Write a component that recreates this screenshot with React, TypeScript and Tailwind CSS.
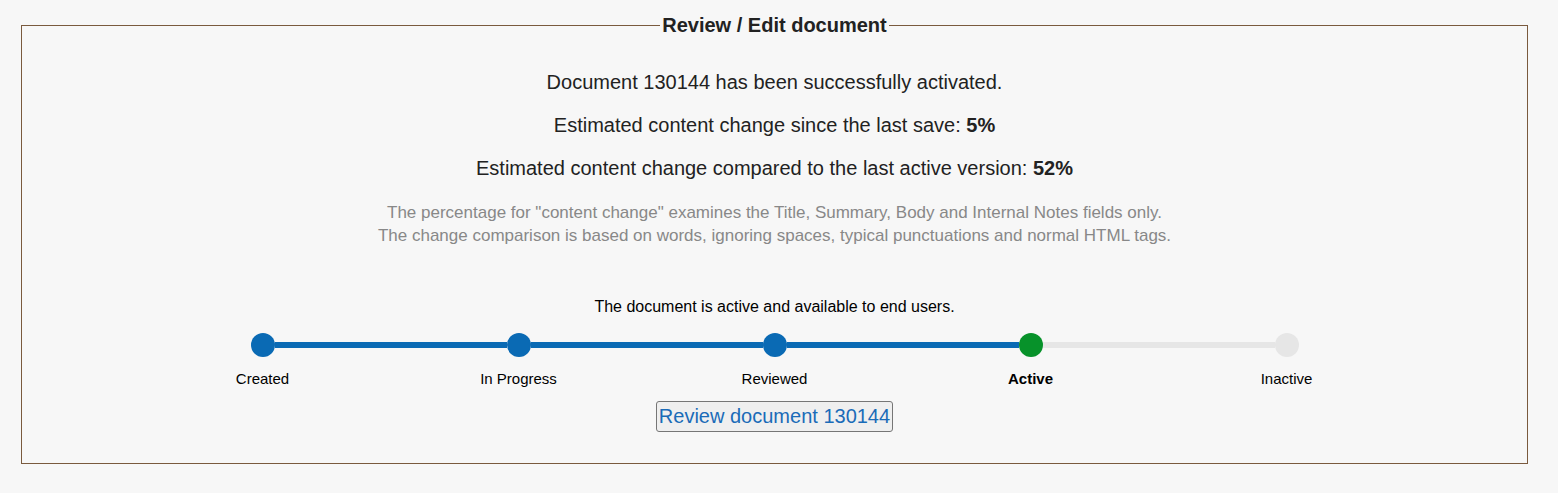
import React from 'react';

const steps = [
  { label: 'Created', state: 'done' },
  { label: 'In Progress', state: 'done' },
  { label: 'Reviewed', state: 'done' },
  { label: 'Active', state: 'current' },
  { label: 'Inactive', state: 'todo' },
];

export default function App() {
  return (
    <div className="min-h-screen bg-[#f7f7f7] pt-[13px] font-['Liberation_Sans',Arial,sans-serif] text-[#222]">
      <fieldset className="ml-[21px] w-[1507px] border border-[#7a5a3e] px-4 pb-[31px] pt-[34px] text-center">
        <legend className="mx-auto px-[2px] text-[20px] font-bold leading-[24px] text-[#222]">
          Review / Edit document
        </legend>

        <p className="text-[20px] leading-[23px]">Document 130144 has been successfully activated.</p>
        <p className="mt-[20px] text-[20px] leading-[23px]">
          Estimated content change since the last save: <b>5%</b>
        </p>
        <p className="mt-[20px] text-[20px] leading-[23px]">
          Estimated content change compared to the last active version: <b>52%</b>
        </p>

        <div className="mt-[21px] text-[17px] leading-[23px] text-[#888]">
          <p>The percentage for "content change" examines the Title, Summary, Body and Internal Notes fields only.</p>
          <p>The change comparison is based on words, ignoring spaces, typical punctuations and normal HTML tags.</p>
        </div>

        <p className="mt-[50px] text-[16px] leading-[19px] text-black">
          The document is active and available to end users.
        </p>

        <div className="mx-auto mt-[17px] flex w-[1280px]">
          {steps.map((s, i) => {
            const leftColor = i === 0 ? 'bg-transparent' : s.state === 'todo' ? 'bg-[#e6e6e6]' : 'bg-[#0a6ab4]';
            const next = steps[i + 1];
            const rightColor = !next ? 'bg-transparent' : next.state === 'todo' ? 'bg-[#e6e6e6]' : 'bg-[#0a6ab4]';
            const dot =
              s.state === 'current' ? 'bg-[#07922a]' : s.state === 'todo' ? 'bg-[#e6e6e6]' : 'bg-[#0a6ab4]';
            return (
              <div key={s.label} className="flex w-[256px] flex-col items-center">
                <div className="flex w-full items-center">
                  <div className={`h-[6px] flex-1 ${leftColor}`} />
                  <div className={`h-[24px] w-[24px] rounded-full ${dot}`} />
                  <div className={`h-[6px] flex-1 ${rightColor}`} />
                </div>
                <span
                  className={`mt-[13px] text-[15px] leading-[17px] text-black ${s.state === 'current' ? 'font-bold' : ''}`}
                >
                  {s.label}
                </span>
              </div>
            );
          })}
        </div>

        <button className="mt-[14px] h-[31px] rounded-[3px] border border-[#767676] bg-[#efefef] px-[2px] text-[20px] leading-[23px] text-[#1a6bb8]">
          Review document 130144
        </button>
      </fieldset>
    </div>
  );
}
